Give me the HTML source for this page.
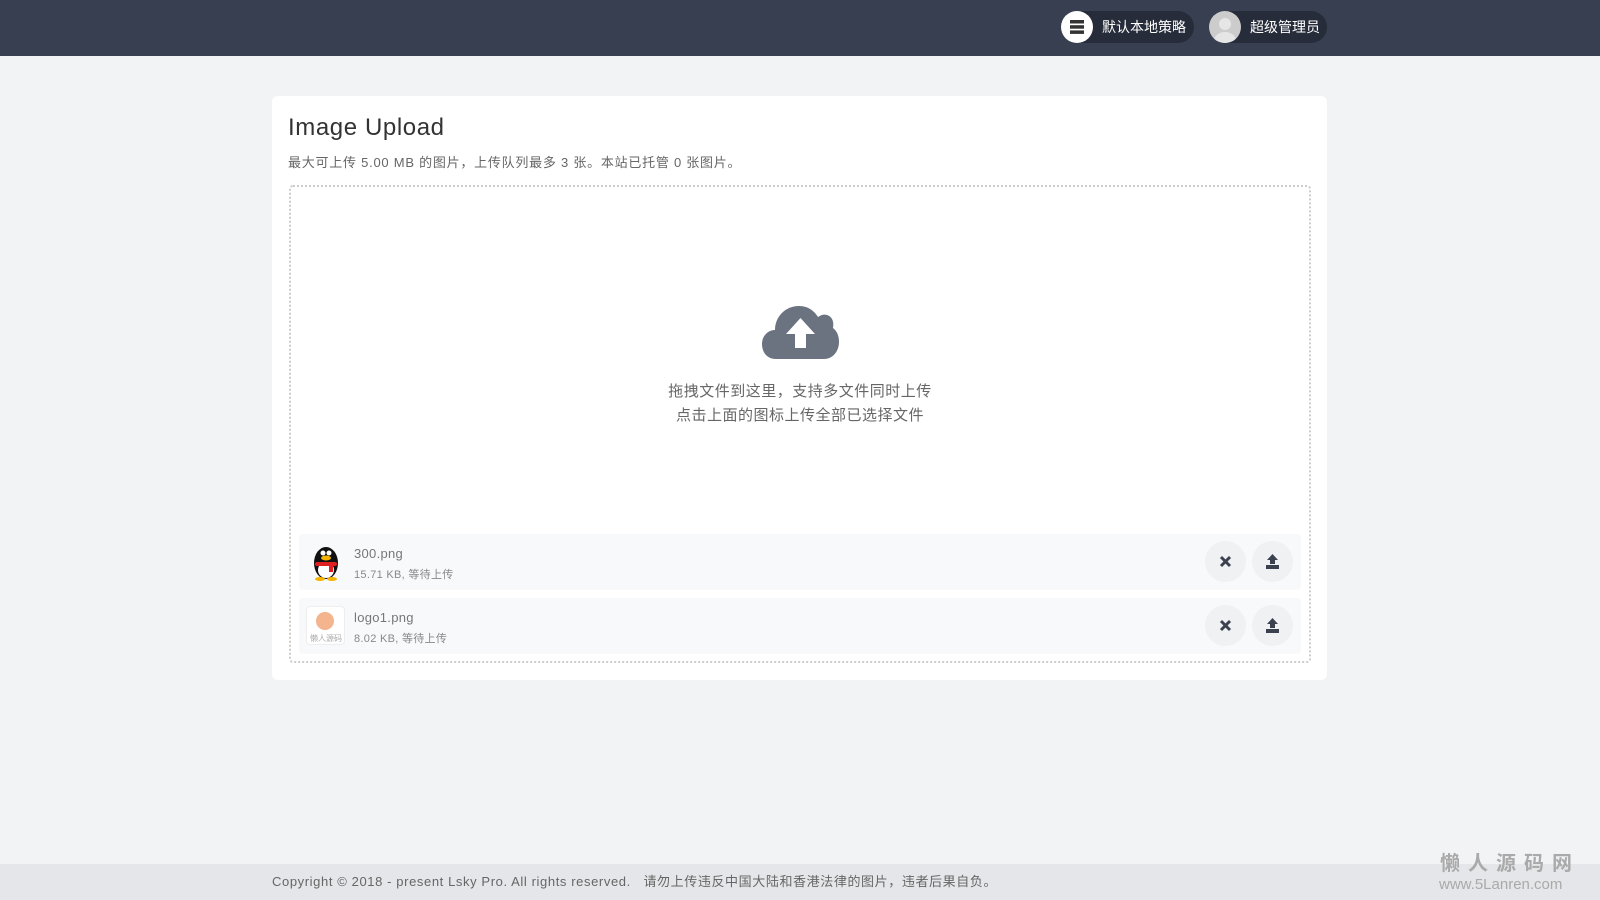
<!DOCTYPE html>
<html><head><meta charset="utf-8">
<style>
*{box-sizing:border-box;margin:0;padding:0}
body{width:1600px;height:900px;background:#f2f3f5;font-family:"Liberation Sans","Noto Sans CJK SC",sans-serif;position:relative;overflow:hidden;color:#555}
.nav{position:absolute;left:0;top:0;width:1600px;height:56px;background:#373f50}
.pill{position:absolute;top:11px;height:32px;border-radius:16px;background:#262c3a;color:#fff;font-size:14px;line-height:32px}
.pill .ic{position:absolute;left:0;top:0;width:32px;height:32px;border-radius:50%;background:#fff}
.card{position:absolute;left:272px;top:96px;width:1055px;height:584px;background:#fff;border-radius:6px}
h1{position:absolute;left:288px;top:114px;font-weight:normal;font-size:24px;color:#333;letter-spacing:0.6px}
.sub{position:absolute;left:288px;top:152px;font-size:13px;color:#666;letter-spacing:0.75px}
.dz{position:absolute;left:289px;top:185px;width:1022px;height:478px;border:2px dotted #ccc;border-radius:4px}
.tx{position:absolute;left:0;width:1600px;text-align:center;font-size:15px;color:#666;letter-spacing:0.5px}
.row{position:absolute;left:299px;width:1002px;height:56px;background:#f8f9fa;border-radius:4px}
.th{position:absolute;left:7px;top:8px;width:39px;height:39px;border-radius:4px}
.nm{position:absolute;left:55px;top:12px;font-size:13px;color:#777;letter-spacing:0.3px}
.sz{position:absolute;left:55px;top:32px;font-size:11px;color:#888;letter-spacing:0.3px}
.btn{position:absolute;top:7px;width:41px;height:41px;border-radius:50%;background:#f0f1f2}
.btn svg{position:absolute;left:12px;top:12px}
.foot{position:absolute;left:0;top:864px;width:1600px;height:36px;background:#e5e6e9;font-size:13px;color:#666;line-height:36px;padding-left:272px;letter-spacing:0.6px}
.wm{position:absolute;left:1440px;top:847px;color:#aaa;font-weight:bold;font-size:20px;letter-spacing:8px}
.wm2{position:absolute;left:1439px;top:876px;color:#aaa;font-size:15px}
</style></head><body>
<div class="nav">
 <div class="pill" style="left:1061px;width:133px"><div class="ic"><svg width="32" height="32"><rect x="9" y="9" width="14" height="3.5" fill="#333"/><rect x="9" y="14.2" width="14" height="3.5" fill="#333"/><rect x="9" y="19.4" width="14" height="3.5" fill="#333"/></svg></div><span style="position:absolute;left:41px">默认本地策略</span></div>
 <div class="pill" style="left:1209px;width:118px"><div class="ic" style="background:#ccc;overflow:hidden"><svg width="32" height="32"><circle cx="16" cy="13" r="6" fill="#e6e6e6"/><ellipse cx="16" cy="30" rx="11" ry="9" fill="#e6e6e6"/></svg></div><span style="position:absolute;left:41px">超级管理员</span></div>
</div>
<div class="card"></div>
<h1>Image Upload</h1>
<div class="sub">最大可上传 5.00 MB 的图片，上传队列最多 3 张。本站已托管 0 张图片。</div>
<div class="dz"></div>
<svg style="position:absolute;left:762px;top:304px" width="77" height="55" viewBox="0 0 77 55"><path d="M14 55 C4 55 0 47 0 40 C0 31 7 26 13 26 C13 13 23 2 37 2 C47 2 53 8 56 13 C59 11 62 10 65 11 C71 13 72 19 71 24 C75 27 77 32 77 38 C77 47 71 55 62 55 Z" fill="#6b7280"/><path d="M38.5 14 L53 30 L44 30 L44 44 L33 44 L33 30 L24 30 Z" fill="#fff"/></svg>
<div class="tx" style="top:380px">拖拽文件到这里，支持多文件同时上传</div>
<div class="tx" style="top:404px">点击上面的图标上传全部已选择文件</div>
<div class="row" style="top:534px">
 <div class="th"><svg width="39" height="39"><ellipse cx="20" cy="21" rx="12" ry="16" fill="#111"/><ellipse cx="20" cy="28" rx="8" ry="8" fill="#fff"/><ellipse cx="20" cy="16" rx="5" ry="2.5" fill="#f5b400"/><rect x="9" y="20" width="22" height="4" rx="2" fill="#e02020"/><rect x="23" y="23" width="4" height="7" fill="#e02020"/><ellipse cx="14" cy="37" rx="5" ry="2" fill="#f5b400"/><ellipse cx="26" cy="37" rx="5" ry="2" fill="#f5b400"/><circle cx="17" cy="11" r="2.5" fill="#fff"/><circle cx="23" cy="11" r="2.5" fill="#fff"/></svg></div>
 <div class="nm">300.png</div><div class="sz">15.71 KB, 等待上传</div>
 <div class="btn" style="left:906px"><svg width="17" height="17"><path d="M4 4 L13 13 M13 4 L4 13" stroke="#3c4150" stroke-width="3"/></svg></div>
 <div class="btn" style="left:953px"><svg width="17" height="17"><path d="M8.5 1 L14 7 L11 7 L11 11 L6 11 L6 7 L3 7 Z M2 12 L15 12 L15 16 L2 16 Z" fill="#3c4150"/></svg></div>
</div>
<div class="row" style="top:598px">
 <div class="th" style="background:#fff;border:1px solid #eee"><svg width="37" height="37"><circle cx="18" cy="14" r="9" fill="#f3b48e"/><text x="3" y="34" font-size="8" fill="#aaa" font-family="Noto Sans CJK SC">懒人源码</text></svg></div>
 <div class="nm">logo1.png</div><div class="sz">8.02 KB, 等待上传</div>
 <div class="btn" style="left:906px"><svg width="17" height="17"><path d="M4 4 L13 13 M13 4 L4 13" stroke="#3c4150" stroke-width="3"/></svg></div>
 <div class="btn" style="left:953px"><svg width="17" height="17"><path d="M8.5 1 L14 7 L11 7 L11 11 L6 11 L6 7 L3 7 Z M2 12 L15 12 L15 16 L2 16 Z" fill="#3c4150"/></svg></div>
</div>
<div class="foot">Copyright © 2018 - present Lsky Pro. All rights reserved. &nbsp; 请勿上传违反中国大陆和香港法律的图片，违者后果自负。</div>
<div class="wm">懒人源码网</div>
<div class="wm2">www.5Lanren.com</div>
</body></html>
